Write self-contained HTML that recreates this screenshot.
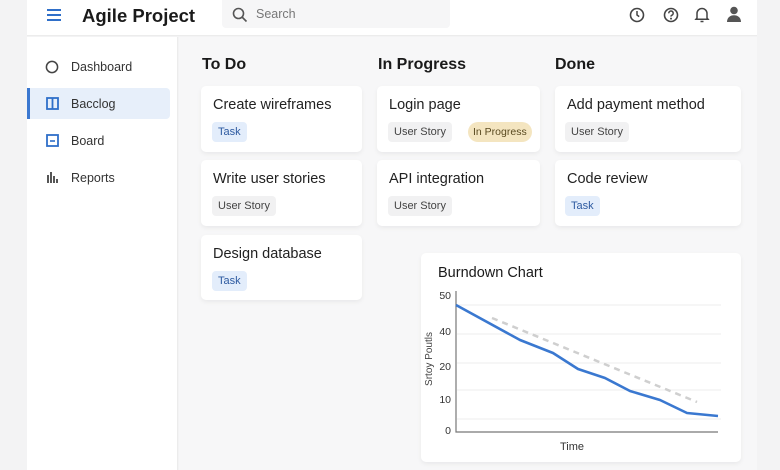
<!DOCTYPE html>
<html><head><meta charset="utf-8"><style>
*{margin:0;padding:0;box-sizing:border-box}
body{width:780px;height:470px;overflow:hidden;background:#f3f3f4;font-family:"Liberation Sans",sans-serif;color:#1f1f1f;position:relative}
.a{position:absolute}
.hdr{left:27px;top:0;width:730px;height:36px;background:#fff;border-bottom:1px solid #ececec}
.side{left:27px;top:37px;width:151px;height:433px;background:#fff;border-right:1px solid #ececec}
.main{left:179px;top:37px;width:578px;height:433px;background:#f7f7f8}
.nav{position:absolute;left:0;width:143px;height:31px;font-size:12.5px;color:#333;display:flex;align-items:center}
.nav span{position:absolute;left:44px}
.col{position:absolute;font-size:16px;font-weight:bold;color:#1a1a1a}
.card{position:absolute;background:#fff;border-radius:5px;box-shadow:0 2px 5px rgba(0,0,0,.06)}
.card .t{position:absolute;left:12px;top:11px;font-size:14.5px;color:#222}
.tag{position:absolute;top:36px;height:20px;line-height:20px;padding:0 6px;border-radius:4px;font-size:11px}
.task{background:#e3edfb;color:#2d5aa0}
.us{background:#f1f1f2;color:#444}
.ip{background:#f4e5c0;color:#5a4a20;border-radius:10px;padding:0 5px;font-size:10.5px}
</style></head><body>
<div class="a hdr"></div>
<svg class="a" style="left:46px;top:8px" width="16" height="14"><path d="M1 2h14M1 7h14M1 12h14" stroke="#2f6fc9" stroke-width="2"/></svg>
<div class="a" style="left:82px;top:5px;font-size:18.5px;font-weight:bold;color:#1a1a1a">Agile Project</div>
<div class="a" style="left:222px;top:0;width:228px;height:28px;background:#f6f6f7;border-radius:0 0 4px 4px"></div>
<svg class="a" style="left:232px;top:7px" width="16" height="16"><circle cx="6.5" cy="6.5" r="5" fill="none" stroke="#555" stroke-width="1.6"/><path d="M10 10l4.5 4.5" stroke="#555" stroke-width="1.6"/></svg>
<div class="a" style="left:256px;top:7px;font-size:12.5px;color:#777">Search</div>
<svg class="a" style="left:628px;top:6px" width="18" height="18"><circle cx="9" cy="9" r="6.5" fill="none" stroke="#444" stroke-width="1.6"/><path d="M9 5v4l2.2 1.6" fill="none" stroke="#444" stroke-width="1.5"/></svg>
<svg class="a" style="left:662px;top:6px" width="18" height="18"><circle cx="9" cy="9" r="6.5" fill="none" stroke="#444" stroke-width="1.6"/><path d="M6.8 7.3a2.2 2.2 0 1 1 2.8 2c-.5.2-.6.6-.6 1.3" fill="none" stroke="#444" stroke-width="1.5"/><circle cx="9" cy="12.6" r="1" fill="#444"/></svg>
<svg class="a" style="left:693px;top:5px" width="18" height="19"><path d="M4 13V8.5a5 5 0 0 1 10 0V13l1 1.2H3z" fill="none" stroke="#444" stroke-width="1.5"/><path d="M7.5 16.5h3" stroke="#444" stroke-width="1.5"/></svg>
<svg class="a" style="left:725px;top:5px" width="18" height="18"><circle cx="9" cy="5.5" r="3.8" fill="#555"/><path d="M2 17c0-4.5 3.2-6.8 7-6.8s7 2.3 7 6.8z" fill="#555"/></svg>

<div class="a side">
 <div class="nav" style="top:14px"><svg style="position:absolute;left:18px" width="14" height="14"><circle cx="7" cy="7" r="5.6" fill="none" stroke="#444" stroke-width="1.5"/></svg><span>Dashboard</span></div>
 <div class="nav" style="top:51px;background:#e7effa;border-left:3px solid #3b78d0;border-radius:0 4px 4px 0"><svg style="position:absolute;left:16px" width="13" height="13"><rect x="1" y="1" width="11" height="11" fill="none" stroke="#2f6fc9" stroke-width="1.8"/><path d="M6.5 1v11" stroke="#2f6fc9" stroke-width="1.8"/></svg><span style="left:41px">Bacclog</span></div>
 <div class="nav" style="top:88px"><svg style="position:absolute;left:19px" width="13" height="13"><rect x="1" y="1" width="11" height="11" fill="none" stroke="#2f6fc9" stroke-width="1.8"/><path d="M4 7h5" stroke="#2f6fc9" stroke-width="1.6"/></svg><span>Board</span></div>
 <div class="nav" style="top:125px"><svg style="position:absolute;left:19px" width="13" height="13"><path d="M2 4v8M5 1v11M8 5v7M11 8v4" stroke="#444" stroke-width="1.8"/></svg><span>Reports</span></div>
</div>

<div class="a main"></div>
<div class="col" style="left:202px;top:56px">To Do</div>
<div class="col" style="left:378px;top:56px">In Progress</div>
<div class="col" style="left:555px;top:56px">Done</div>

<div class="card" style="left:201px;top:86px;width:161px;height:66px"><div class="t">Create wireframes</div><div class="tag task" style="left:11px">Task</div></div>
<div class="card" style="left:201px;top:160px;width:161px;height:66px"><div class="t">Write user stories</div><div class="tag us" style="left:11px">User Story</div></div>
<div class="card" style="left:201px;top:235px;width:161px;height:65px"><div class="t">Design database</div><div class="tag task" style="left:11px">Task</div></div>

<div class="card" style="left:377px;top:86px;width:163px;height:66px"><div class="t">Login page</div><div class="tag us" style="left:11px">User Story</div><div class="tag ip" style="left:91px">In Progress</div></div>
<div class="card" style="left:377px;top:160px;width:163px;height:66px"><div class="t">API integration</div><div class="tag us" style="left:11px">User Story</div></div>

<div class="card" style="left:555px;top:86px;width:186px;height:66px"><div class="t">Add payment method</div><div class="tag us" style="left:10px">User Story</div></div>
<div class="card" style="left:555px;top:160px;width:186px;height:66px"><div class="t">Code review</div><div class="tag task" style="left:10px">Task</div></div>

<div class="card" style="left:421px;top:253px;width:320px;height:209px"></div>
<div class="a" style="left:438px;top:265px;font-size:14.5px;color:#1a1a1a">Burndown Chart</div>
<svg class="a" style="left:421px;top:253px" width="320" height="209">
 <g stroke="#eeeeee" stroke-width="1"><path d="M36 52H300M36 81H300M36 110H300M36 137H300M36 166H300"/></g>
 <path d="M35 38V179H297" fill="none" stroke="#777" stroke-width="1.2"/>
 <g font-family="Liberation Sans" font-size="10.5" fill="#333" text-anchor="end">
  <text x="30" y="46">50</text><text x="30" y="82">40</text><text x="30" y="117">20</text><text x="30" y="150">10</text><text x="30" y="181">0</text>
 </g>
 <text x="151" y="197" font-family="Liberation Sans" font-size="11" fill="#333" text-anchor="middle">Time</text>
 <text transform="translate(11 106) rotate(-90)" font-family="Liberation Sans" font-size="10" fill="#444" text-anchor="middle">Srtoy Poutls</text>
 <path d="M71 65L276 149" stroke="#cfcfcf" stroke-width="2.5" stroke-dasharray="6 5" fill="none"/>
 <path d="M35 52L99 87L132 100L157 116L184 125L209 138L239 147L266 160L297 163" stroke="#3a78d0" stroke-width="2.6" fill="none" stroke-linejoin="round"/>
</svg>
</body></html>
